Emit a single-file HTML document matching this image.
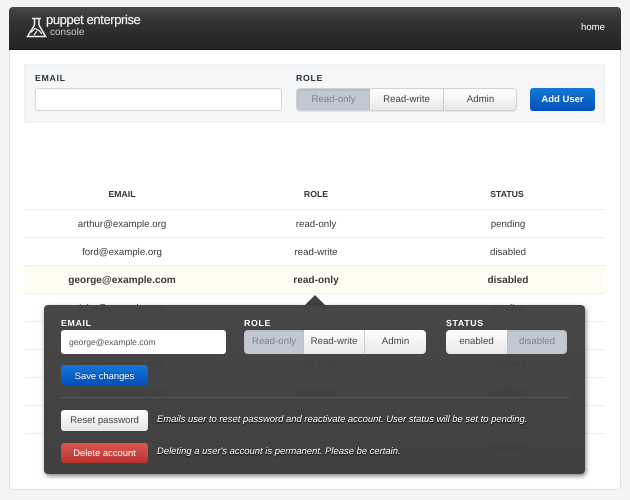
<!DOCTYPE html>
<html><head><meta charset="utf-8">
<style>
html,body{margin:0;padding:0;background:#f3f4f6}
body{width:630px;height:500px;overflow:hidden;position:relative;font-family:"Liberation Sans",sans-serif;color:#3a3a3a;font-size:9.7px;text-rendering:geometricPrecision;filter:blur(.3px)}
div,span,a{position:absolute;box-sizing:border-box}
.c{text-align:center;white-space:nowrap}
.lab{font-weight:bold;font-size:8.8px;letter-spacing:.65px;color:#2f3338;white-space:nowrap}
.w{color:#fff;text-shadow:0 1px 1px #000}
.inp{background:#fff;border:1px solid #d3d5d8;border-radius:3px}
.seg{text-align:center;background:linear-gradient(#fff,#e8e8e8);color:#444;border-right:1px solid #ccc}
.on{background:#c3c9d2;color:#7d838b;border-right:0;box-shadow:inset 0 1px 2px rgba(0,0,0,.12)}
.sep{left:24px;width:581px;height:1px;background:#eeeff0}
.blue{background:linear-gradient(#1278d8,#0450b8);color:#fff;text-align:center;border-radius:3px;text-shadow:0 -1px 0 rgba(0,0,0,.3)}
.r{line-height:13px}
.th{font-size:8.7px;line-height:11px;font-weight:bold;color:#333}
.b{font-weight:bold;font-size:10.1px}
</style></head><body>
<div style="left:9px;top:7px;width:612px;height:483px;background:#fff;border:1px solid #dfe1e4;border-radius:4px"></div>
<div style="left:9px;top:7px;width:612px;height:43px;border-radius:4px 4px 0 0;background:linear-gradient(#4a4a4a,#343434 30%,#232323);border-bottom:1px solid #1a1a1a"></div>
<svg style="position:absolute;left:26px;top:17px" width="22" height="21" viewBox="0 0 22 21" fill="none" stroke="#f0f0f0" stroke-width="1.5"><path d="M6 1.5H15M8.5 2V8L1.5 19.5H19.5L13 8V2"/><path d="M5 15.5l4-4 4 2 3 3.5M8 18l3-4" stroke-width="1.2"/></svg>
<div style="left:46px;top:12px;font-size:13px;line-height:16px;color:#f2f2f2;white-space:nowrap;letter-spacing:-.4px;-webkit-text-stroke:.2px #f2f2f2">puppet enterprise</div>
<div style="left:50px;top:27px;font-size:10px;line-height:12px;color:#c8c8c8;white-space:nowrap">console</div>
<div style="left:581px;top:22px;color:#fff;font-size:9.6px;line-height:12px">home</div>

<div style="left:24px;top:64px;width:581px;height:59px;background:#f5f6f8;border:1px solid #f0f1f3"></div>
<div class="lab" style="left:35px;top:73px;line-height:11px">EMAIL</div>
<div class="inp" style="left:35px;top:88px;width:247px;height:23px"></div>
<div class="lab" style="left:296px;top:73px;line-height:11px">ROLE</div>
<div style="left:296px;top:88px;width:221px;height:23px;border:1px solid #d0d2d5;border-radius:4px;overflow:hidden;line-height:22px;box-shadow:0 1px 1px rgba(0,0,0,.08)">
 <div class="seg on" style="left:0;top:0;width:73px;height:21px">Read-only</div>
 <div class="seg" style="left:73px;top:0;width:74px;height:21px">Read-write</div>
 <div class="seg" style="left:147px;top:0;width:73px;height:21px;border-right:0">Admin</div>
</div>
<div class="blue" style="left:530px;top:88px;width:65px;height:23px;line-height:23px;font-weight:bold;font-size:9.5px">Add User</div>

<div class="c th" style="left:22px;width:200px;top:189px">EMAIL</div>
<div class="c th" style="left:216px;width:200px;top:189px">ROLE</div>
<div class="c th" style="left:407px;width:200px;top:189px">STATUS</div>
<div class="sep" style="top:209px"></div><div class="sep" style="top:237px"></div>
<div class="sep" style="top:265px"></div><div class="sep" style="top:293px"></div>
<div class="sep" style="top:321px"></div><div class="sep" style="top:349px"></div>
<div class="sep" style="top:377px"></div><div class="sep" style="top:405px"></div><div class="sep" style="top:433px"></div>
<div style="left:24px;top:266px;width:581px;height:27px;background:#fffdf2"></div>

<div class="c r" style="left:22px;width:200px;top:218px">arthur@example.org</div>
<div class="c r" style="left:216px;width:200px;top:218px">read-only</div>
<div class="c r" style="left:408px;width:200px;top:218px">pending</div>
<div class="c r" style="left:22px;width:200px;top:246px">ford@example.org</div>
<div class="c r" style="left:216px;width:200px;top:246px">read-write</div>
<div class="c r" style="left:408px;width:200px;top:246px">disabled</div>
<div class="c r b" style="left:22px;width:200px;top:274px">george@example.com</div>
<div class="c r b" style="left:216px;width:200px;top:274px">read-only</div>
<div class="c r b" style="left:408px;width:200px;top:274px">disabled</div>

<div class="c r" style="left:22px;width:200px;top:302px">john@example.com</div>
<div class="c r" style="left:216px;width:200px;top:302px">admin</div>
<div class="c r" style="left:408px;width:200px;top:302px">pending</div>
<div class="c r" style="left:22px;width:200px;top:358px">paul@example.com</div>
<div class="c r" style="left:216px;width:200px;top:358px">read-write</div>
<div class="c r" style="left:408px;width:200px;top:358px">disabled</div>
<div class="c r" style="left:22px;width:200px;top:386px">ringo@example.com</div>
<div class="c r" style="left:216px;width:200px;top:386px">read-only</div>
<div class="c r" style="left:408px;width:200px;top:386px">enabled</div>
<div class="c r" style="left:408px;width:200px;top:442px">enabled</div>

<svg style="position:absolute;left:304px;top:295px" width="22" height="11" viewBox="0 0 22 11"><path d="M0 11L11 0L22 11Z" fill="#414141"/></svg>
<div style="left:44px;top:305px;width:541px;height:169px;background:linear-gradient(rgba(65,65,65,.97),rgba(58,58,58,.97));border-radius:4px;box-shadow:1px 2px 5px rgba(0,0,0,.5)"></div>

<div class="lab" style="left:61px;top:318px;line-height:11px;color:#fff">EMAIL</div>
<div class="inp" style="left:61px;top:330px;width:165px;height:24px;border:0;line-height:25px;padding-left:8px;color:#555;font-size:8.6px">george@example.com</div>
<div class="lab" style="left:244px;top:318px;line-height:11px;color:#fff">ROLE</div>
<div style="left:244px;top:330px;width:182px;height:24px;border-radius:4px;overflow:hidden;line-height:24px">
 <div class="seg on" style="left:0;top:0;width:60px;height:24px">Read-only</div>
 <div class="seg" style="left:60px;top:0;width:61px;height:24px">Read-write</div>
 <div class="seg" style="left:121px;top:0;width:61px;height:24px;border-right:0">Admin</div>
</div>
<div class="lab" style="left:446px;top:318px;line-height:11px;color:#fff">STATUS</div>
<div style="left:446px;top:330px;width:121px;height:24px;border-radius:4px;overflow:hidden;line-height:24px">
 <div class="seg" style="left:0;top:0;width:61px;height:24px;border-right:0">enabled</div>
 <div class="seg on" style="left:61px;top:0;width:60px;height:24px">disabled</div>
</div>
<div class="blue" style="left:61px;top:365px;width:87px;height:20px;line-height:21px;font-size:9.4px">Save changes</div>
<div style="left:60px;top:397px;width:510px;height:1px;background:#555"></div>
<div class="c" style="left:61px;top:410px;width:87px;height:21px;line-height:22px;background:linear-gradient(#fff,#e4e4e4);border-radius:3px;color:#444;font-size:9.6px">Reset password</div>
<div class="w" style="left:157px;top:413px;line-height:13px;font-style:italic;font-size:9.45px;white-space:nowrap">Emails user to reset password and reactivate account. User status will be set to pending.</div>
<div class="c" style="left:61px;top:443px;width:87px;height:20px;line-height:20px;background:linear-gradient(#de5650,#b8322e);border-radius:3px;color:#fff;font-size:9.4px">Delete account</div>
<div class="w" style="left:157px;top:445px;line-height:13px;font-style:italic;font-size:9.45px;white-space:nowrap">Deleting a user's account is permanent. Please be certain.</div>
</body></html>
